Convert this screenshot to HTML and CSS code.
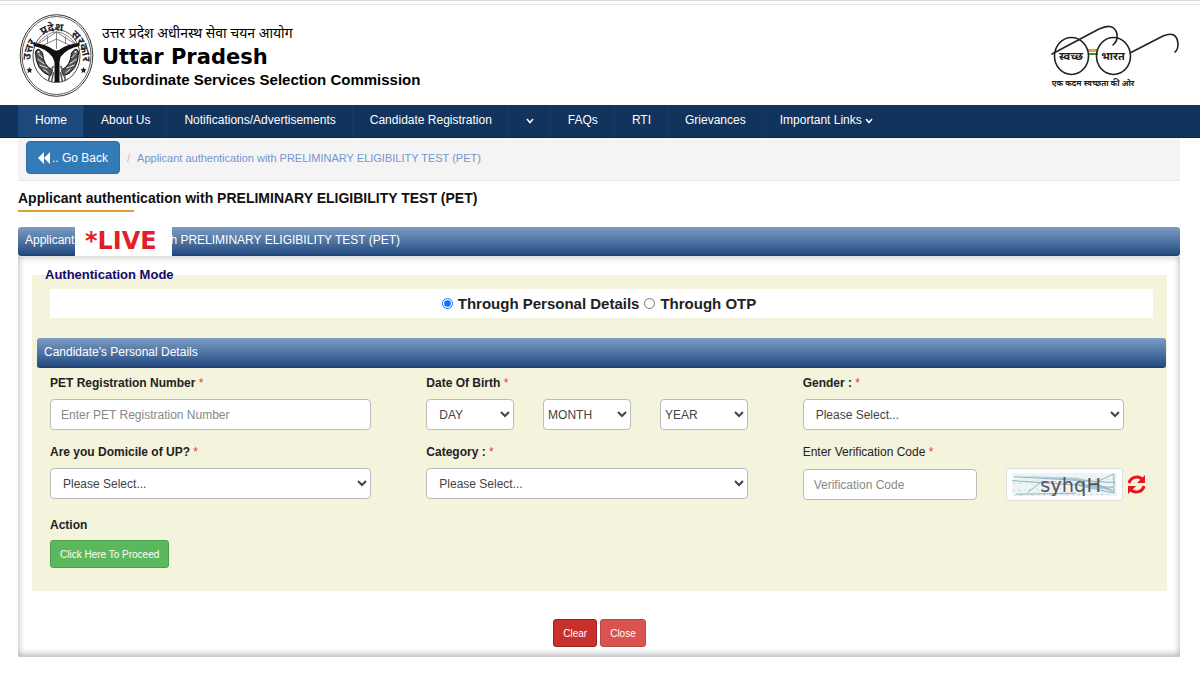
FILE: index.html
```html
<!DOCTYPE html>
<html lang="en">
  <head>
    <meta charset="UTF-8" />
    <meta name="viewport" content="width=device-width, initial-scale=1.0" />
    <title>Uttar Pradesh Subordinate Services Selection Commission</title>
    <link rel="stylesheet" href="styles.css">
  </head>
  <body>
    <header class="site-header">
      <svg class="emblem" viewBox="0 0 74 83" aria-hidden="true">
        <defs>
          <path id="emblem-arc" d="M11.500 52 A26 29.500 0 1 1 62.500 52" />
        </defs>
        <g fill="none" stroke="#333">
          <ellipse cx="37" cy="41.500" rx="36.300" ry="40.800" stroke-width="1" />
          <ellipse cx="37" cy="41.500" rx="34.500" ry="39" stroke-width=".8" />
          <ellipse cx="37" cy="42" rx="23.500" ry="26.500" stroke-width=".9" />
        </g>
        <g class="emblem-text">
          <text><textPath href="#emblem-arc" startOffset="6%">उत्तर</textPath></text>
          <text><textPath href="#emblem-arc" startOffset="35%">प्रदेश</textPath></text>
          <text><textPath href="#emblem-arc" startOffset="65%">सरकार</textPath></text>
        </g>
        <!-- bow -->
        <path d="M17 31 Q37 5 57 31 M17 31 L37 18 L57 31 M22 32 L37 25 L52 32 M37 17 V35 M28 22 V30 M46 22 V30" fill="none" stroke="#777" stroke-width=".9" />
        <!-- rivers -->
        <path d="M14 29 Q26 30 33 35 Q37 38 41 35 Q48 30 60 29 L60 32 Q48 34 41 43 L40 48 V68 H35 V48 L33 43 Q26 34 14 32 Z" fill="#111" />
        <!-- fishes -->
        <g id="fish">
          <path d="M16 38 Q18 32 23 39 Q24 52 33 56 L31 62 Q16 57 16 38 Z" fill="#555" stroke="#111" stroke-width="1" />
          <path d="M19 40 L23 44 M18 45 L25 50 M20 51 L28 54 M24 55 L29 59" stroke="#eee" stroke-width="1" />
          <circle cx="19" cy="38" r="1.100" fill="#fff" />
        </g>
        <use href="#fish" transform="matrix(-1 0 0 1 75 0)" />
        <path d="M29 67 Q31 56 34 52 M32 68 L34 58 M46 67 Q44 56 41 52 M43 68 L41 58" fill="none" stroke="#555" stroke-width="1.500" />
        <path d="M10 53 l1 2 2 .3 -1.500 1.400 .4 2.200 -1.900 -1 -1.900 1 .4 -2.200 -1.500 -1.400 2 -.3 Z M64 53 l1 2 2 .3 -1.500 1.400 .4 2.200 -1.900 -1 -1.900 1 .4 -2.200 -1.500 -1.400 2 -.3 Z" fill="#222" />
      </svg>
      <div class="brand">
        <p class="brand-hindi" lang="hi">उत्तर प्रदेश अधीनस्थ सेवा चयन आयोग</p>
        <h1>Uttar Pradesh</h1>
        <p class="brand-sub">Subordinate Services Selection Commission</p>
      </div>
      <svg class="swachh" viewBox="0 0 130 66" aria-hidden="true">
        <rect x="41" y="24" width="10" height="3" fill="#f0a030" />
        <rect x="41" y="28" width="10" height="2" fill="#279536" />
        <g fill="none" stroke="#222" stroke-width="1.600" stroke-linecap="round">
          <ellipse cx="24.500" cy="31" rx="17" ry="18.500" />
          <ellipse cx="66.500" cy="31" rx="17" ry="18.500" />
          <path d="M5 29 L52 4 Q67 -3 70 9 Q71 16 66 20" />
          <path d="M83 28 L116 11 Q130 5 131 19 Q131 25 128 27" />
        </g>
        <text class="swachh-lens" x="24" y="35">स्वच्छ</text>
        <text class="swachh-lens" x="66" y="35">भारत</text>
        <text class="swachh-line" x="46" y="61">एक कदम स्वच्छता की ओर</text>
      </svg>
    </header>

    <nav class="main-nav">
      <a href="#" class="active">Home</a>
      <a href="#">About Us</a>
      <a href="#">Notifications/Advertisements</a>
      <a href="#">Candidate Registration</a>
      <a href="#" aria-label="More"><svg class="caret" viewBox="0 0 8 6"><path d="M1 1 L4 4.500 L7 1" /></svg></a>
      <a href="#">FAQs</a>
      <a href="#">RTI</a>
      <a href="#">Grievances</a>
      <a href="#">Important Links <svg class="caret" viewBox="0 0 8 6"><path d="M1 1 L4 4.500 L7 1" /></svg></a>
    </nav>

    <main class="container">
      <div class="breadcrumb">
        <button type="button" class="btn-back">
          <svg viewBox="0 0 12 12" aria-hidden="true"><path d="M6 0 V12 L0 6 Z M12 0 V12 L6 6 Z" /></svg><span>.. Go Back</span>
        </button>
        <span class="slash">/</span>
        <a href="#">Applicant authentication with PRELIMINARY ELIGIBILITY TEST (PET)</a>
      </div>

      <h2 class="page-title">Applicant authentication with PRELIMINARY ELIGIBILITY TEST (PET)</h2>

      <section class="panel">
        <h3 class="bar panel-heading">
          Applicant authentication with PRELIMINARY ELIGIBILITY TEST (PET)
          <span class="live">*LIVE</span>
        </h3>
        <form class="panel-body">
          <fieldset>
            <legend>Authentication Mode</legend>
            <div class="mode">
              <input type="radio" name="mode" id="modePersonal" checked />
              <label for="modePersonal">Through Personal Details</label>
              <input type="radio" name="mode" id="modeOtp" />
              <label for="modeOtp">Through OTP</label>
            </div>

            <h4 class="bar">Candidate's Personal Details</h4>
            <div class="fields">
              <div class="field">
                <label for="regNo">PET Registration Number <span class="req">*</span></label>
                <input type="text" id="regNo" placeholder="Enter PET Registration Number" />
              </div>
              <div class="field">
                <label for="day">Date Of Birth <span class="req">*</span></label>
                <div class="dob">
                  <select id="day"><option>DAY</option></select>
                  <select class="tight" aria-label="Month"><option>MONTH</option></select>
                  <select class="tight" aria-label="Year"><option>YEAR</option></select>
                </div>
              </div>
              <div class="field">
                <label for="gender">Gender : <span class="req">*</span></label>
                <select id="gender"><option>Please Select...</option></select>
              </div>
              <div class="field">
                <label for="domicile">Are you Domicile of UP? <span class="req">*</span></label>
                <select id="domicile"><option>Please Select...</option></select>
              </div>
              <div class="field">
                <label for="category">Category : <span class="req">*</span></label>
                <select id="category"><option>Please Select...</option></select>
              </div>
              <div class="field field-code">
                <label for="code">Enter Verification Code <span class="req">*</span></label>
                <div class="code-row">
                  <input type="text" id="code" placeholder="Verification Code" />
                  <svg class="captcha" viewBox="0 0 116 32" role="img" aria-label="Captcha">
                    <rect x="4" y="4" width="108" height="24" fill="#eef3f4" />
                    <path d="M5 10 L96 17 L111 22 L90 20 L60 14 Z M7 7 L70 9 L90 13 Z" fill="#a9ccd9" />
                    <path d="M6 8 L110 14 M4 12 L108 19 M8 26 L70 25 M20 24 L36 12 M90 14 L109 5 V24 L88 14 M72 17 L110 25" fill="none" stroke="#86b2c2" />
                    <path d="M6 15 L110 10 M5 22 L111 18 M7 27 L108 26" fill="none" stroke="#b5c2c6" stroke-dasharray="1 4 2 5" />
                    <text class="captcha-text" x="33" y="24">syhqH</text>
                  </svg>
                  <button type="button" class="refresh" aria-label="Refresh code">
                    <svg viewBox="0 0 19 21">
                      <path d="M2 9 A8 8 0 0 1 15 5 M17 12 A8 8 0 0 1 4 16" fill="none" stroke="#e8141c" stroke-width="3" />
                      <path d="M18 1 V9 H10 Z M1 20 V12 H9 Z" fill="#e8141c" />
                    </svg>
                  </button>
                </div>
              </div>
            </div>
            <div class="action">
              <p>Action</p>
              <button type="submit" class="btn btn-success">Click Here To Proceed</button>
            </div>
          </fieldset>
          <div class="form-buttons">
            <button type="reset" class="btn btn-clear">Clear</button>
            <button type="button" class="btn btn-close">Close</button>
          </div>
        </form>
      </section>
    </main>
  </body>
</html>
```
FILE: styles.css
```css
* {
  box-sizing: border-box;
}

body {
  margin: 0;
  background: #fff;
  color: #222;
  font-family: "Liberation Sans", Arial, sans-serif;
  font-size: 12px;
  line-height: 20px;
}

h1,
h2,
h3,
h4,
p {
  margin: 0;
}

button,
input,
select {
  font-family: inherit;
}

/* header */
.site-header {
  display: flex;
  align-items: flex-start;
  height: 105px;
  padding: 9px 23px 0 19px;
  border-top: 1px solid #d8d8d8;
  box-shadow: inset 0 3px #fff, inset 0 4px #e6e6e6;
}

.emblem {
  width: 75px;
  height: 83px;
  margin-top: 4px;
  overflow: visible;
}

.emblem-text {
  font: bold 11px "Noto Sans", sans-serif;
  fill: #222;
}

.brand {
  flex: 1;
  margin-left: 8px;
  padding-top: 12px;
  color: #000;
}

.brand-hindi {
  font-family: "Noto Sans", sans-serif;
  font-size: 14px;
  line-height: 22px;
}

.brand h1 {
  font: bold 21px/26px "DejaVu Sans", Verdana, sans-serif;
}

.brand-sub {
  font-size: 15px;
  font-weight: bold;
  line-height: 20px;
}

.swachh {
  width: 130px;
  height: 66px;
  margin-top: 15px;
  overflow: visible;
}

.swachh text {
  font-family: "Noto Sans", sans-serif;
  font-weight: bold;
  text-anchor: middle;
  fill: #222;
}

.swachh-lens {
  font-size: 11px;
}

.swachh-line {
  font-size: 8px;
}

/* navigation */
.main-nav {
  display: flex;
  height: 33px;
  padding-left: 18px;
  background: #12335b;
  border-bottom: 1px solid #0a2347;
}

.main-nav a {
  padding: 5px 16px 5px 17px;
  border-right: 1px solid #163a63;
  color: #fff;
  text-decoration: none;
  white-space: nowrap;
}

.main-nav .active {
  background: #1e4a7b;
}

.main-nav a:last-child {
  border-right: 0;
}

.caret {
  width: 8px;
  height: 6px;
  fill: none;
  stroke: #fff;
  stroke-width: 1.5;
}

.container {
  padding: 0 20px 18px 18px;
}

.breadcrumb {
  display: flex;
  align-items: center;
  height: 43px;
  padding: 0 8px 3px;
  background: #f4f4f4;
  border-bottom: 1px solid #e4e4e4;
  font-size: 11px;
}

.breadcrumb a {
  color: #7595cf;
  text-decoration: none;
}

.slash {
  margin: 0 7px;
  color: #bbb;
}

.btn-back {
  display: flex;
  align-items: center;
  height: 33px;
  padding: 0 11px;
  border: 1px solid #2e6da4;
  border-radius: 4px;
  background: #337ab7;
  color: #fff;
  font-size: 12px;
}

.btn-back svg {
  width: 12px;
  height: 12px;
  margin-right: 2px;
  fill: #fff;
}

.page-title {
  position: relative;
  margin-bottom: 15px;
  padding: 7px 0 4px;
  color: #111;
  font-size: 14px;
  font-weight: bold;
}

.page-title::after {
  content: "";
  position: absolute;
  left: 0;
  bottom: 0;
  width: 116px;
  height: 2px;
  background: #e2a032;
}

/* panel */
.bar {
  height: 30px;
  padding: 4px 7px;
  border-bottom: 1px solid #1d3f70;
  border-radius: 3px;
  background: linear-gradient(#7c9cc2, #5479a8 45%, #23497e);
  color: #fff;
  font-size: 12px;
  font-weight: normal;
}

.panel-heading {
  position: relative;
  height: 29px;
  padding: 3px 7px;
}

.live {
  position: absolute;
  top: 0;
  left: 57px;
  width: 97px;
  height: 29px;
  padding-left: 10px;
  background: #fff;
  color: #e01f2b;
  font: bold 24px/29px "DejaVu Sans", Verdana, sans-serif;
}

.panel-body {
  padding: 8px 13px 9px 14px;
  border: 1px solid #ccc;
  border-top-color: #e4e4e4;
  border-width: 1px 0;
  box-shadow: inset 0 -1px 7px #aaa;
}

fieldset {
  min-width: 0;
  margin: 0;
  padding: 4px 1px 23px 5px;
  border: 0;
  background: #f4f3dc;
}

legend {
  margin-left: 6px;
  padding: 0 2px;
  color: #120a6b;
  font-size: 13px;
  font-weight: bold;
}

.mode {
  display: flex;
  align-items: center;
  justify-content: center;
  height: 29px;
  margin: 0 13px 20px;
  padding-right: 10px;
  background: #fff;
  font-size: 15px;
  font-weight: bold;
}

.mode input {
  width: 11px;
  height: 11px;
  margin: 0 5px;
}

.fields {
  display: grid;
  grid-template-columns: repeat(3, 1fr);
  row-gap: 12px;
  padding-top: 5px;
}

.field {
  min-width: 0;
  padding: 0 42px 0 13px;
}

.field label {
  display: block;
  margin-bottom: 6px;
  font-weight: bold;
}

.field-code label {
  font-weight: normal;
}

.req {
  color: #e33;
  font-weight: normal;
}

.field input,
.field select {
  width: 100%;
  height: 31px;
  border: 1px solid #bbb;
  border-radius: 4px;
  background: #fff;
  color: #444;
  font-size: 12px;
}

.field input {
  padding: 0 10px;
}

.field select {
  padding: 0 8px;
}

.field .tight {
  padding: 0;
}

.field input::placeholder {
  color: #888;
}

.dob {
  display: grid;
  grid-template-columns: repeat(3, 1fr);
  column-gap: 29px;
}

.field-code {
  padding-right: 20px;
}

.code-row {
  display: flex;
  align-items: center;
}

.code-row input {
  flex: 1;
  min-width: 0;
}

.captcha {
  width: 117px;
  height: 33px;
  margin-left: 29px;
  border: 1px solid #ddd;
  border-radius: 3px;
  background: #fff;
}

.captcha-text {
  font: 20px "DejaVu Sans", sans-serif;
  fill: #555;
}

.refresh {
  width: 19px;
  height: 21px;
  margin-left: 4px;
  padding: 0;
  border: 0;
  background: none;
}

.refresh svg {
  display: block;
}

.action {
  padding: 14px 13px 0;
  font-weight: bold;
}

.action p {
  margin-bottom: 5px;
}

.btn {
  height: 28px;
  padding: 0 9px;
  border: 1px solid;
  border-radius: 3px;
  color: #fff;
  font-size: 10px;
}

.btn-success {
  background: #5cb85c;
  border-color: #4a9f4a;
}

.btn-clear {
  background: #c9302c;
  border-color: #8f2522;
}

.btn-close {
  background: #d9534f;
  border-color: #b94a48;
}

.form-buttons {
  display: flex;
  justify-content: center;
  gap: 3px;
  padding-top: 28px;
}
```
